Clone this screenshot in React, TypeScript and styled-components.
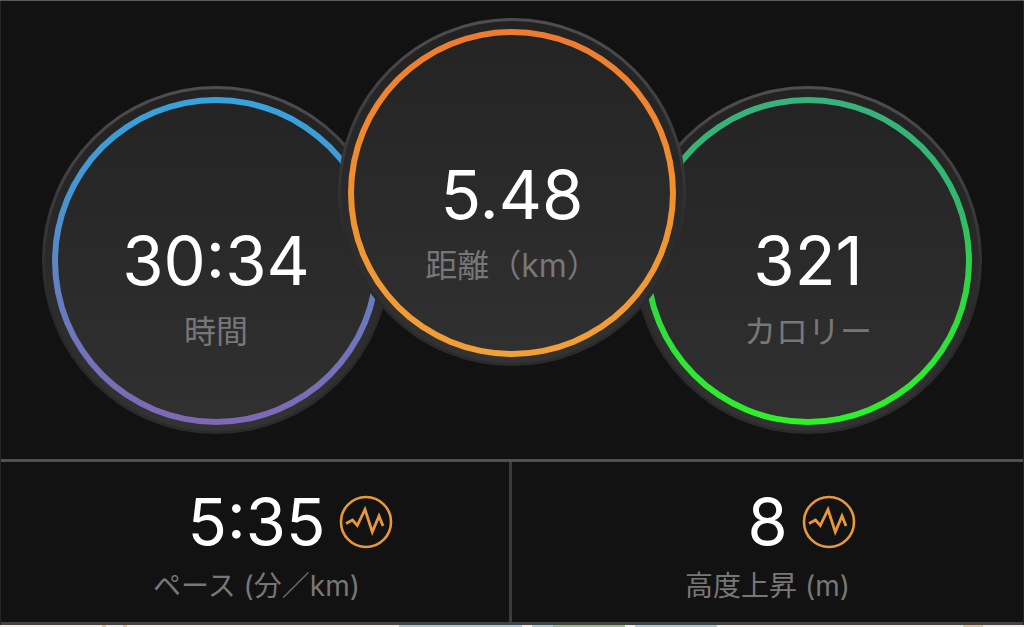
import React from "react";
import styled, { createGlobalStyle } from "styled-components";

const GlobalStyle = createGlobalStyle`
  *, *::before, *::after { box-sizing: border-box; }
  body {
    margin: 0;
    background: #121212;
    font-family: Inter, "Noto Sans CJK JP", sans-serif;
  }
`;

const Page = styled.main`
  display: flex;
  flex-direction: column;
  border-top: 1px solid #5a5c5c;
  color: #fff;
`;

const Panel = styled.div`
  border: solid #262626;
  border-width: 0 1px;
`;

const Dials = styled.section`
  display: flex;
  justify-content: center;
  align-items: flex-end;
  padding: 17px 0 25px;
`;

const Dial = styled.article<{ $raised?: boolean }>`
  position: relative;
  z-index: ${(p) => (p.$raised ? 1 : 0)};
  flex: none;
  width: 348px;
  height: 348px;
  margin: ${(p) => (p.$raised ? "0 -52px 68px" : "0")};
  padding: 8px 7px 6px;
  border: 3px solid transparent;
  border-radius: 50%;
  background:
    linear-gradient(#222222, #2b2b2b 60%, #333333) padding-box,
    linear-gradient(#4e4e4e, #3a3a3a 35%, #292929 65%, #2b2b2b) border-box;
`;

const Ring = styled.div<{ $colors: string; $raised?: boolean }>`
  display: flex;
  flex-direction: column;
  align-items: center;
  gap: 7px;
  height: 100%;
  padding-top: ${(p) => (p.$raised ? 120 : 118)}px;
  border: 6px solid transparent;
  border-radius: 50%;
  background:
    linear-gradient(#242424, #2a2a2a 50%, #303030) padding-box,
    linear-gradient(${(p) => p.$colors}) border-box;
`;

const Value = styled.strong<{ $size: number }>`
  font-size: ${(p) => p.$size}px;
  font-weight: 400;
  line-height: 80px;
`;

const Label = styled.span<{ $size: number }>`
  color: #777;
  font-size: ${(p) => p.$size}px;
  font-weight: 400;
  line-height: 48px;
  white-space: nowrap;
`;

const Stats = styled.section`
  display: grid;
  grid-template-columns: 1fr 1fr;
  border-top: 3px solid #505050;
  border-bottom: 3px solid #424242;
`;

const Stat = styled.article`
  display: flex;
  flex-direction: column;
  align-items: center;
  padding: 20px 0 12px;

  & + & {
    border-left: 3px solid #3c3c3c;
    margin-left: -3px;
  }
`;

const StatRow = styled.div`
  display: grid;
  grid-template-columns: 1fr auto 1fr;
  align-items: center;
  column-gap: 14px;
  width: 100%;
`;

const ChartButton = styled.button`
  grid-column: 3;
  justify-self: start;
  display: block;
  padding: 0;
  border: 0;
  background: none;
  cursor: pointer;

  svg { display: block; }
`;

const StatValue = styled(Value)`
  grid-column: 2;
`;

const MapEdge = styled.div`
  height: 2px;
  background: linear-gradient(
    90deg,
    #f4f1ee 0 10%, #f0c8a4 10% 10.4%, #f4f1ee 10.4% 12%, #f0c8a4 12% 12.4%,
    #f6f4f2 12.4% 39%, #a9cfdf 39% 51%, #f0f0ee 51% 52%, #a9cfdf 52% 54%,
    #90c48c 54% 61%, #f0f0ee 61% 62%, #a9cfdf 62% 70%, #f4f1ee 70% 94%,
    #f0c890 94% 96%, #f0eeee 96%
  );
`;

const PulseIcon = () => (
  <svg width="54" height="54" viewBox="0 0 54 54" fill="none" stroke="#e8983c" aria-hidden="true">
    <circle cx="27" cy="27" r="25" strokeWidth="2.6" />
    <path d="M7 28.500L13.500 25L18.300 30.500L26 14.500L33.300 37L40 21L44 31" strokeWidth="2.8" />
  </svg>
);

const dials = [
  { value: "30:34", label: "時間", colors: "#36a3dc, #4f8fcc 40%, #6a7abf 65%, #7f68b4" },
  { value: "5.48", label: "距離（km）", colors: "#ee7b30, #f09030 50%, #f2a038", raised: true },
  { value: "321", label: "カロリー", colors: "#38b27c, #33b86c 35%, #2fd545 55%, #2ff02a" },
];

const stats = [
  { value: "5:35", label: "ペース (分／km)" },
  { value: "8", label: "高度上昇 (m)" },
];

export default function App() {
  return (
    <>
      <GlobalStyle />
      <Page>
        <Panel>
          <Dials>
            {dials.map((d) => (
              <Dial key={d.label} $raised={d.raised}>
                <Ring $colors={d.colors} $raised={d.raised}>
                  <Value $size={67}>{d.value}</Value>
                  <Label $size={32}>{d.label}</Label>
                </Ring>
              </Dial>
            ))}
          </Dials>
          <Stats>
            {stats.map((s) => (
              <Stat key={s.label}>
                <StatRow>
                  <StatValue $size={65}>{s.value}</StatValue>
                  <ChartButton type="button" aria-label={s.label}>
                    <PulseIcon />
                  </ChartButton>
                </StatRow>
                <Label $size={28}>{s.label}</Label>
              </Stat>
            ))}
          </Stats>
        </Panel>
        <MapEdge />
      </Page>
    </>
  );
}
